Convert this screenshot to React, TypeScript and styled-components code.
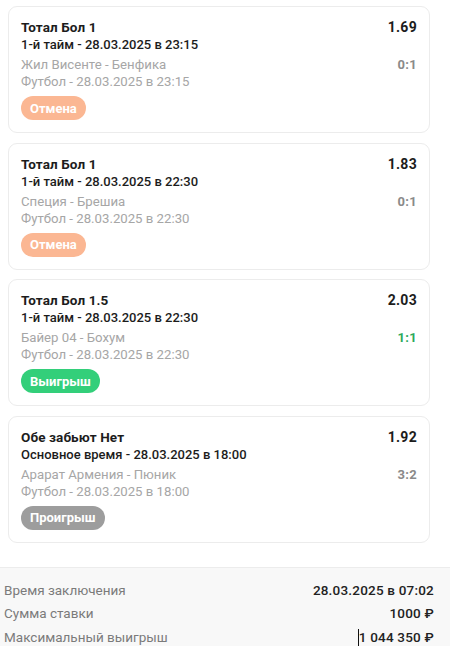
import styled, { createGlobalStyle } from 'styled-components'

const GlobalStyle = createGlobalStyle`
    html,
    body {
        margin: 0;
        padding: 0;
        background: #fff;
    }

    body {
        font-family: Roboto, Inter, 'Noto Sans', 'Liberation Sans', sans-serif;
        color: #1f1f1f;
        -webkit-font-smoothing: antialiased;
    }
`

type Status = 'cancel' | 'win' | 'lose'

type Bet = {
    market: string
    period: string
    teams: string
    event: string
    odds: string
    score: string
    status: Status
}

const bets: Bet[] = [
    {
        market: 'Тотал Бол 1',
        period: '1-й тайм - 28.03.2025 в 23:15',
        teams: 'Жил Висенте - Бенфика',
        event: 'Футбол - 28.03.2025 в 23:15',
        odds: '1.69',
        score: '0:1',
        status: 'cancel',
    },
    {
        market: 'Тотал Бол 1',
        period: '1-й тайм - 28.03.2025 в 22:30',
        teams: 'Специя - Брешиа',
        event: 'Футбол - 28.03.2025 в 22:30',
        odds: '1.83',
        score: '0:1',
        status: 'cancel',
    },
    {
        market: 'Тотал Бол 1.5',
        period: '1-й тайм - 28.03.2025 в 22:30',
        teams: 'Байер 04 - Бохум',
        event: 'Футбол - 28.03.2025 в 22:30',
        odds: '2.03',
        score: '1:1',
        status: 'win',
    },
    {
        market: 'Обе забьют Нет',
        period: 'Основное время - 28.03.2025 в 18:00',
        teams: 'Арарат Армения - Пюник',
        event: 'Футбол - 28.03.2025 в 18:00',
        odds: '1.92',
        score: '3:2',
        status: 'lose',
    },
]

const statusLabel: Record<Status, string> = {
    cancel: 'Отмена',
    win: 'Выигрыш',
    lose: 'Проигрыш',
}

const statusColor: Record<Status, string> = {
    cancel: '#fbb793',
    win: '#33cf7a',
    lose: '#9d9d9d',
}

const Page = styled.div`
    display: flex;
    flex-direction: column;
`

const List = styled.div`
    display: flex;
    flex-direction: column;
    gap: 9.5px;
    padding: 6px 20px 0 8px;
`

const Card = styled.div`
    display: flex;
    flex-direction: column;
    align-items: stretch;
    border: 1px solid #ececec;
    border-radius: 9px;
    padding: 12px;
    background: #fff;
`

const Row = styled.div`
    display: flex;
    justify-content: space-between;
    align-items: baseline;
    height: 17px;
`

const Title = styled.div`
    font-size: 13.5px;
    font-weight: 700;
    letter-spacing: 0.1px;
    line-height: 17px;
    color: #1c1c1c;
`

const Odds = styled.div`
    font-size: 14px;
    font-weight: 700;
    letter-spacing: 0.3px;
    line-height: 17px;
    color: #1c1c1c;
`

const Period = styled.div`
    font-size: 13px;
    font-weight: 500;
    line-height: 17px;
    height: 17px;
    color: #1c1c1c;
`

const Details = styled.div`
    margin-top: 3px;
    display: flex;
    flex-direction: column;
`

const Muted = styled.div`
    font-size: 13.2px;
    font-weight: 400;
    line-height: 17px;
    height: 17px;
    color: #a6a6a6;
`

const Score = styled.div<{ $win: boolean }>`
    font-size: 13px;
    font-weight: 700;
    letter-spacing: 0.3px;
    line-height: 17px;
    color: ${(p) => (p.$win ? '#2ea95c' : '#8a8a8a')};
`

const Badge = styled.div<{ $status: Status }>`
    align-self: flex-start;
    display: flex;
    align-items: center;
    margin-top: 6px;
    height: 24px;
    padding: 0 9px;
    border-radius: 12px;
    background: ${(p) => statusColor[p.$status]};
    color: #fff;
    font-size: 13px;
    font-weight: 700;
`

const Summary = styled.div`
    margin-top: 24.5px;
    border-top: 1px solid #ececec;
    background: #f8f8f8;
    padding: 13.5px 16px 12px 4px;
    display: flex;
    flex-direction: column;
    gap: 6.5px;
`

const SummaryRow = styled.div`
    display: flex;
    justify-content: space-between;
    align-items: center;
    height: 17px;
    line-height: 17px;
    font-size: 13.5px;
`

const Label = styled.span`
    color: #7b7b7b;
    font-weight: 400;
`

const Value = styled.span`
    color: #222;
    font-weight: 500;
    letter-spacing: 0.2px;
`

const Caret = styled.span`
    display: inline-block;
    width: 1px;
    height: 17px;
    background: #111;
    vertical-align: -4px;
`

const BetCard = ({ bet }: { bet: Bet }) => (
    <Card>
        <Row>
            <Title>{bet.market}</Title>
            <Odds>{bet.odds}</Odds>
        </Row>
        <Period>{bet.period}</Period>
        <Details>
            <Row>
                <Muted>{bet.teams}</Muted>
                <Score $win={bet.status === 'win'}>{bet.score}</Score>
            </Row>
            <Muted>{bet.event}</Muted>
        </Details>
        <Badge $status={bet.status}>{statusLabel[bet.status]}</Badge>
    </Card>
)

export default function App() {
    return (
        <Page>
            <GlobalStyle />
            <List>
                {bets.map((bet, i) => (
                    <BetCard key={i} bet={bet} />
                ))}
            </List>
            <Summary>
                <SummaryRow>
                    <Label>Время заключения</Label>
                    <Value>28.03.2025 в 07:02</Value>
                </SummaryRow>
                <SummaryRow>
                    <Label>Сумма ставки</Label>
                    <Value>1000 ₽</Value>
                </SummaryRow>
                <SummaryRow>
                    <Label>Максимальный выигрыш</Label>
                    <Value>
                        <Caret />1 044 350 ₽
                    </Value>
                </SummaryRow>
            </Summary>
        </Page>
    )
}
